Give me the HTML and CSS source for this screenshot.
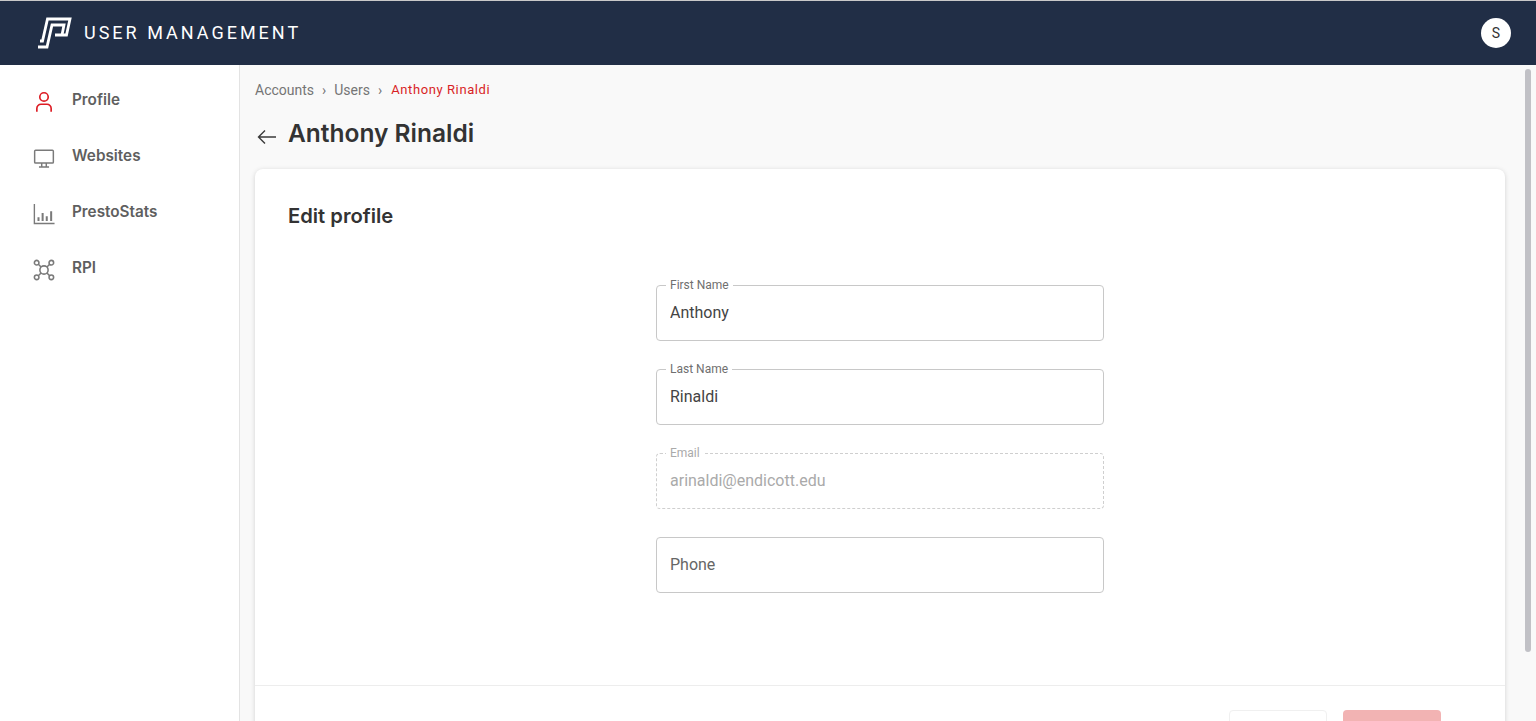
FILE: index.html
```html
<!DOCTYPE html>
<html lang="en">
<head>
<meta charset="utf-8">
<title>User Management</title>
<link rel="stylesheet" href="styles.css">
</head>
<body>
<header class="topbar">
  <div class="brand">
    <svg class="logo" viewBox="0 0 36 34" width="36" height="34" fill="none" stroke="#fff" stroke-width="2.800">
      <path d="M2 31H11L16 9H28L26 19"/>
      <path d="M4 25H6.500L11.500 3H34L30.500 19H19"/>
    </svg>
    <span class="brand-name">USER MANAGEMENT</span>
  </div>
  <div class="avatar">S</div>
</header>
<div class="shell">
  <nav class="sidebar">
    <a class="nav-item active">
      <svg class="nav-icon" viewBox="0 0 24 24" fill="none" stroke="currentColor" stroke-width="1.800"><circle cx="12" cy="6.500" r="4.600"/><path d="M4.200 22.500v-3.500a4.500 4.500 0 0 1 4.500-4.500h6.600a4.500 4.500 0 0 1 4.500 4.500v3.500"/></svg>
      <span>Profile</span>
    </a>
    <a class="nav-item">
      <svg class="nav-icon" viewBox="0 0 24 24" fill="none" stroke="currentColor" stroke-width="1.600"><rect x="1.800" y="3.500" width="20.400" height="14" rx="1"/><path d="M9.500 17.500v4M14.500 17.500v4M6.500 21.800h11"/></svg>
      <span>Websites</span>
    </a>
    <a class="nav-item">
      <svg class="nav-icon" viewBox="0 0 24 24" fill="none" stroke="currentColor" stroke-width="1.500"><path d="M1.500 1v21.300h22"/><path d="M6 19.500v-4M10.500 19.500v-8.500M15 19.500v-5M19.800 19.500v-10.500" stroke-width="2.200"/></svg>
      <span>PrestoStats</span>
    </a>
    <a class="nav-item">
      <svg class="nav-icon" viewBox="0 0 24 24" fill="none" stroke="currentColor" stroke-width="1.700"><circle cx="12" cy="12" r="4.500"/><circle cx="4" cy="4" r="2.500"/><circle cx="20" cy="4" r="2.500"/><circle cx="4" cy="20" r="2.500"/><circle cx="20" cy="20" r="2.500"/><path d="M5.800 5.800 8.800 8.800M18.200 5.800 15.200 8.800M5.800 18.200l3-3M18.200 18.200l-3-3"/></svg>
      <span>RPI</span>
    </a>
  </nav>
  <main class="content">
    <ol class="crumbs">
      <li>Accounts</li>
      <li class="sep">›</li>
      <li>Users</li>
      <li class="sep">›</li>
      <li class="current">Anthony Rinaldi</li>
    </ol>
    <div class="page-head">
      <svg class="back" viewBox="0 0 20 16" width="20" height="16" fill="none" stroke="#3a3a3a" stroke-width="1.400"><path d="M19 8H1.500M8 1.500 1.500 8 8 14.500"/></svg>
      <h1>Anthony Rinaldi</h1>
    </div>
    <section class="card">
      <h2>Edit profile</h2>
      <form class="form">
        <div class="field">
          <label class="float">First Name</label>
          <input class="input" type="text" value="Anthony">
        </div>
        <div class="field">
          <label class="float">Last Name</label>
          <input class="input" type="text" value="Rinaldi">
        </div>
        <div class="field disabled">
          <label class="float">Email</label>
          <input class="input" type="text" value="arinaldi@endicott.edu" disabled>
        </div>
        <div class="field">
          <input class="input" type="text" placeholder="Phone">
        </div>
      </form>
      <div class="card-foot">
        <button class="btn btn-cancel" type="button"></button>
        <button class="btn btn-save" type="button"></button>
      </div>
    </section>
    <div class="scroll-thumb"></div>
  </main>
</div>
</body>
</html>
```
FILE: styles.css
```css
* { box-sizing: border-box; }
html, body { height: 100%; margin: 0; overflow: hidden; }
body { font-family: Roboto, "Liberation Sans", sans-serif; background: #fff; display: flex; flex-direction: column; }

.topbar { height: 65px; flex: none; background: #212e46; border-top: 1px solid #c9c9c9; display: flex; align-items: center; justify-content: space-between; padding: 0 25px 0 36px; }
.brand { display: flex; align-items: center; gap: 12px; }
.logo { display: block; }
.brand-name { color: #fff; font-size: 18px; letter-spacing: 3px; font-weight: 400; margin-bottom: 2px; }
.avatar { width: 30px; height: 30px; border-radius: 50%; background: #fff; color: #333; font-size: 14px; display: flex; align-items: center; justify-content: center; }

.shell { flex: 1; display: flex; min-height: 0; }
.sidebar { width: 240px; flex: none; background: #fff; border-right: 1px solid #e3e3e3; padding-top: 6px; }
.nav-item { height: 56px; display: flex; align-items: center; gap: 17px; padding-left: 33px; color: #5f5f5f; font-family: Inter, sans-serif; font-weight: 600; font-size: 15.300px; }
.nav-item.active .nav-icon { color: #dd1c24; }
.nav-icon { width: 22px; height: 22px; color: #7a7a7a; flex: none; margin-top: 5px; }

.content { position: relative; flex: 1; min-width: 0; background: #f9f9f9; padding: 16px 31px 0 15px; overflow: hidden; }
.crumbs { list-style: none; margin: 0; padding: 0; display: flex; align-items: center; gap: 8px; font-size: 14px; line-height: 18px; color: #757575; }
.crumbs .current { color: #d81f26; font-size: 13px; letter-spacing: .6px; margin-left: 1px; }
.crumbs .sep { font-size: 14px; }
.page-head { display: flex; align-items: center; gap: 11px; margin: 14px 0 0 2px; height: 40px; }
.back { display: block; margin-top: 8px; }
h1 { margin: 0; font-family: Inter, sans-serif; font-size: 24.500px; font-weight: 600; color: #333; }

.card { margin-top: 16px; background: #fff; border-radius: 8px; box-shadow: 0 1px 5px rgba(0,0,0,.16); }
.card h2 { margin: 0; padding: 33px 33px 0; font-family: Inter, sans-serif; font-size: 20.200px; line-height: 28px; font-weight: 600; color: #333; }
.form { display: flex; flex-direction: column; align-items: center; gap: 28px; padding: 55px 0 92px; }
.field { position: relative; width: 448px; }
.input { display: block; width: 100%; height: 56px; border: 1px solid #c8c8c8; border-radius: 4px; padding: 0 13px 1px; background: #fff; font-family: Roboto, sans-serif; font-size: 16px; color: #444; outline: none; }
.input::placeholder { color: #666; opacity: 1; }
.float { position: absolute; left: 10px; top: -7px; padding: 0 4px; background: #fff; font-size: 12px; line-height: 14px; color: #6f6f6f; }
.disabled .input { border: 1px dashed #cfcfcf; color: #aaa; }
.disabled .float { color: #aaa; }

.card-foot { border-top: 1px solid #ededed; padding: 24px 64px 24px 0; display: flex; justify-content: flex-end; gap: 16px; }
.btn { width: 98px; height: 40px; border-radius: 4px; }
.btn-cancel { background: #fff; border: 1px solid #f0f0f0; }
.btn-save { background: #f2b3b3; border: 0; }

.scroll-thumb { position: absolute; top: 4px; right: 5px; width: 6px; height: 583px; border-radius: 3px; background: #c1c1c6; }
```
